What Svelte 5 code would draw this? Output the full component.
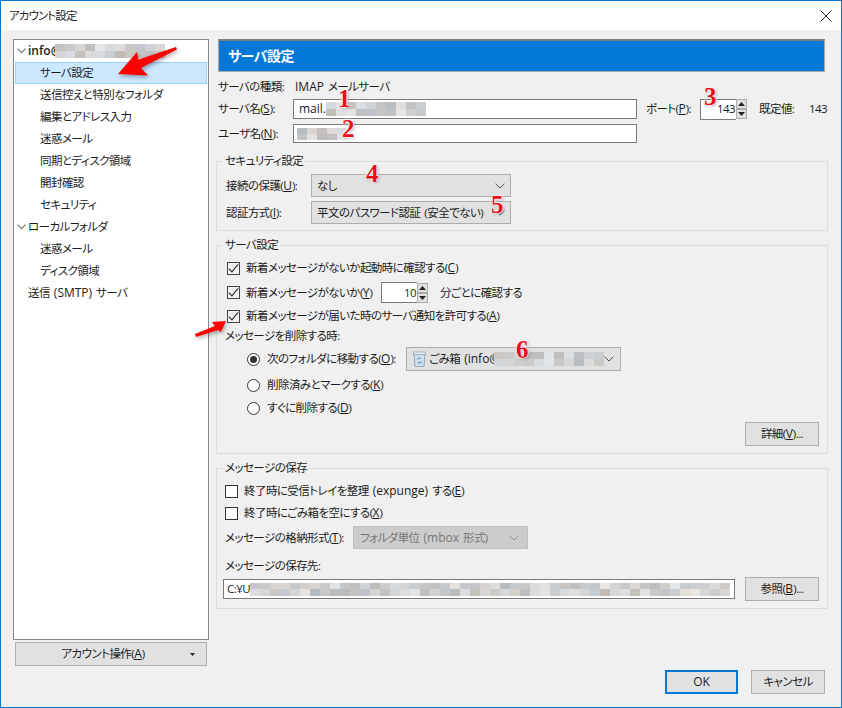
<script>
  const tree = [
    { label: 'サーバ設定', selected: true },
    { label: '送信控えと特別なフォルダ' },
    { label: '編集とアドレス入力' },
    { label: '迷惑メール' },
    { label: '同期とディスク領域' },
    { label: '開封確認' },
    { label: 'セキュリティ' }
  ];
  const local = ['迷惑メール', 'ディスク領域'];
  const numbers = [
    { n: 1, x: 337, y: 85 },
    { n: 2, x: 341, y: 115 },
    { n: 3, x: 703, y: 83 },
    { n: 4, x: 365, y: 160 },
    { n: 5, x: 490, y: 191 },
    { n: 6, x: 515, y: 336 }
  ];
  function shade(i) {
    const h = Math.abs(Math.sin(i * 12.9898 + 4.1) * 43758.5453) % 1;
    const t = Math.abs(Math.sin(i * 78.233 + 1.7) * 24634.6345) % 1;
    const l = Math.round(186 + h * 44);
    const d = Math.round((t - 0.5) * 10);
    return `rgb(${l + d},${l},${l - d})`;
  }
  const cells = (n, seed) => Array.from({ length: n }, (_, i) => shade(seed + i));
</script>

{#snippet blur(cols, rows, seed, cellH)}
  <span class="blur" style="grid-template-columns: repeat({cols}, 10px); grid-auto-rows: {cellH}px">
    {#each cells(cols * rows, seed) as c}<i style="background: {c}"></i>{/each}
  </span>
{/snippet}

{#snippet chevron()}
  <svg class="chev" width="10" height="6" viewBox="0 0 10 6"><path d="M.6.8 5 5 9.4.8" fill="none" stroke="#555" stroke-width="1"/></svg>
{/snippet}

{#snippet treeChevron()}
  <svg class="tchev" width="9" height="6" viewBox="0 0 9 6"><path d="M.5.7 4.5 4.7 8.5.7" fill="none" stroke="#777" stroke-width="1.2"/></svg>
{/snippet}

{#snippet check(on)}
  <span class="check">
    {#if on}<svg width="11" height="11" viewBox="0 0 11 11"><path d="M1 5.6 4 8.8 10 1.4" fill="none" stroke="#333" stroke-width="1.2"/></svg>{/if}
  </span>
{/snippet}

{#snippet radio(on)}
  <span class="radio">{#if on}<span class="dot"></span>{/if}</span>
{/snippet}

{#snippet spin()}
  <span class="spin">
    <span class="sbtn"><svg width="7" height="4" viewBox="0 0 7 4"><path d="M3.5 0 7 4H0z" fill="#222"/></svg></span>
    <span class="sbtn"><svg width="7" height="4" viewBox="0 0 7 4"><path d="M0 0h7L3.500 4z" fill="#222"/></svg></span>
  </span>
{/snippet}

<div class="window">
  <header class="title">
    <span>アカウント設定</span>
    <svg width="12" height="12" viewBox="0 0 12 12"><path d="M.5.500l11 11M11.500.5l-11 11" stroke="#222" stroke-width="1" fill="none"/></svg>
  </header>

  <div class="body">
    <aside class="side">
      <div class="tree">
        <div class="row root">{@render treeChevron()}<b class="en">info@</b><span class="over">{@render blur(11, 2, 3, 7)}</span></div>
        {#each tree as t}
          <div class="row child" class:sel={t.selected}>{t.label}</div>
        {/each}
        <div class="row root">{@render treeChevron()}<span>ローカルフォルダ</span></div>
        {#each local as t}
          <div class="row child">{t}</div>
        {/each}
        <div class="row smtp">送信 <span class="en">(SMTP)</span> サーバ</div>
      </div>
      <div class="btn acct">
        <span>アカウント操作(<u>A</u>)</span>
        <svg width="5" height="3" viewBox="0 0 5 3"><path d="M0 0h5L2.500 3z" fill="#222"/></svg>
      </div>
    </aside>

    <main class="main">
      <h1 class="head">サーバ設定</h1>

      <div class="line type"><span class="lbl0">サーバの種類:</span><span><span class="en">IMAP</span> メールサーバ</span></div>

      <div class="line server">
        <span class="lbl1">サーバ名(<u>S</u>):</span>
        <div class="field grow"><span class="en">mail.</span>{@render blur(10, 2, 40, 7)}</div>
        <span class="port">ポート(<u>P</u>):</span>
        <div class="field portf">143</div>
        {@render spin()}
        <span class="def">既定値:</span>
        <span class="defv">143</span>
      </div>

      <div class="line user">
        <span class="lbl1">ユーザ名(<u>N</u>):</span>
        <div class="field userf">{@render blur(5, 2, 70, 6)}</div>
      </div>

      <section class="group sec">
        <span class="legend">セキュリティ設定</span>
        <div class="line c23">
          <span class="lbl2">接続の保護(<u>U</u>):</span>
          <div class="combo w200"><span>なし</span>{@render chevron()}</div>
        </div>
        <div class="line c23 mt4">
          <span class="lbl2">認証方式(<u>I</u>):</span>
          <div class="combo w200"><span>平文のパスワード認証 (安全でない)</span>{@render chevron()}</div>
        </div>
      </section>

      <section class="group srv">
        <span class="legend">サーバ設定</span>
        <div class="line r20">{@render check(true)}<span>新着メッセージがないか起動時に確認する(<u>C</u>)</span></div>
        <div class="line r21">
          {@render check(true)}<span class="s2">新着メッセージがないか(<u>Y</u>)</span>
          <div class="field minf">10</div>
          {@render spin()}
          <span class="after">分ごとに確認する</span>
        </div>
        <div class="line r20 mt3">{@render check(true)}<span>新着メッセージが届いた時のサーバ通知を許可する(<u>A</u>)</span></div>
        <div class="line plain">メッセージを削除する時:</div>
        <div class="line r24 ind">
          {@render radio(true)}<span class="mv">次のフォルダに移動する(<u>O</u>):</span>
          <div class="combo folder">
            <svg class="trash" width="15" height="16" viewBox="0 0 15 16">
              <path d="M2 3h11l-1 12.500H3z" fill="#cfe0ea" stroke="#8fa5b0" stroke-width=".9"/>
              <path d="M1.500 1h12v2.500h-12z" fill="#e9f1f5" stroke="#8fa5b0" stroke-width=".8"/>
              <path d="M5.500 8.500a2 2 0 0 1 3.500-.8M9.500 10.500a2 2 0 0 1-3.500.6" fill="none" stroke="#4c9fce" stroke-width="1.100"/>
            </svg>
            <span class="ftext">ごみ箱 <span class="en">(info@</span></span><span class="over2">{@render blur(11, 2, 90, 7)}</span>
            {@render chevron()}
          </div>
        </div>
        <div class="line r20 ind mt4">{@render radio(false)}<span class="mv">削除済みとマークする(<u>K</u>)</span></div>
        <div class="line r20 ind mt3">{@render radio(false)}<span class="mv">すぐに削除する(<u>D</u>)</span></div>
        <div class="line end mt4"><div class="btn b74">詳細(<u>V</u>)...</div></div>
      </section>

      <section class="group store">
        <span class="legend">メッセージの保存</span>
        <div class="line r20">{@render check(false)}<span>終了時に受信トレイを整理 <span class="en">(expunge)</span> する(<u>E</u>)</span></div>
        <div class="line r20 mt2">{@render check(false)}<span>終了時にごみ箱を空にする(<u>X</u>)</span></div>
        <div class="line c23 mt3 fmt">
          <span class="lbl3">メッセージの格納形式(<u>T</u>):</span>
          <div class="combo dis"><span>フォルダ単位 <span class="en">(mbox</span> 形式)</span>{@render chevron()}</div>
        </div>
        <div class="line plain dest">メッセージの保存先:</div>
        <div class="line pathrow">
          <div class="field path"><span class="cu">C:¥U</span>{@render blur(48, 2, 130, 6.500)}</div>
          <div class="btn b74">参照(<u>B</u>)...</div>
        </div>
      </section>

      <footer class="foot">
        <div class="btn ok"><span class="en">OK</span></div>
        <div class="btn cancel">キャンセル</div>
      </footer>
    </main>
  </div>

  <!-- screenshot annotations laid over the dialog -->
  <svg class="marks" width="842" height="708" viewBox="0 0 842 708">
    <polygon points="118,74 137,52 138.500,59.500 176,47 177,49.500 141,68 148,75.500" fill="#f00"/>
    <polygon points="226,321 212,322 215,326 195,334 196,337 218,330 221,332" fill="#f00"/>
  </svg>
  {#each numbers as m}
    <span class="num" style="left: {m.x}px; top: {m.y}px">{m.n}</span>
  {/each}
</div>

<style>
  :global(body) { margin: 0; background: #f0f0f0; }
  * { box-sizing: border-box; }
  .window {
    position: relative; width: 842px; height: 708px; overflow: hidden;
    border: 1px solid #0078d7; background: #f0f0f0; color: #1c1c1c;
    font: 11.5px/16px "Open Sans", "Noto Sans CJK JP", sans-serif;
    letter-spacing: -.55px; word-spacing: 1.5px;
    font-feature-settings: "palt"; white-space: nowrap;
  }
  u { text-underline-offset: 1px; font-size: 12px; letter-spacing: 0; }
  .en { font-size: 12px; letter-spacing: 0; }
  .title {
    height: 29px; background: #fff; display: flex; align-items: center;
    justify-content: space-between; padding: 0 9px 0 8px; letter-spacing: -.9px;
  }
  .body { display: flex; gap: 7px; padding: 9px 0 0 12px; }
  .side { width: 196px; }
  .tree { height: 601px; background: #fff; border: 1px solid #828790; padding: 0 1px; }
  .row { height: 22px; display: flex; align-items: center; border: 1px solid transparent; }
  .root { padding-left: 1px; }
  .root b { font-weight: 600; }
  .tchev { margin: 0 2px 0 0; flex: none; }
  .over { display: inline-flex; margin-left: -6px; }
  .over2 { display: inline-flex; margin-left: -6px; }
  .child { padding-left: 24px; }
  .smtp { padding-left: 12px; white-space: pre; }
  .sel { background: #cce8ff; border-color: #99d1ff; }
  .blur { display: inline-grid; flex: none; }
  .blur i { display: block; }
  .btn {
    height: 24px; background: #e1e1e1; border: 1px solid #adadad;
    display: flex; align-items: center; justify-content: center;
  }
  .acct { margin: 2px 2px 0; position: relative; padding-right: 16px; }
  .acct svg { position: absolute; right: 11px; top: 10px; }
  .main { width: 612px; }
  .head {
    margin: 0 3px 0 2px; height: 33px; background: #0078d7; color: #fff;
    border: 1px solid #a9a9a9; border-top: 2px solid #7f7f7f;
    font-size: 14px; font-weight: 700; line-height: 30px; padding-left: 9px;
  }
  .line { display: flex; align-items: center; }
  .type { height: 16px; margin: 7px 0 0 2px; }
  .lbl0 { width: 77px; flex: none; }
  .lbl1 { width: 75px; flex: none; }
  .server { height: 20px; margin: 4px 0 0 2px; }
  .user { height: 19px; margin: 5px 0 0 2px; }
  .field { background: #fff; border: 1px solid #7a7a7a; display: flex; align-items: center; height: 100%; }
  .grow { width: 344px; padding-left: 5px; }
  .port { margin-left: 9px; width: 54px; flex: none; }
  .portf { width: 36px; height: 21px; justify-content: flex-end; border-right: 0; padding-right: 1px; }
  .spin { display: flex; flex-direction: column; width: 11px; height: 20px; flex: none; gap: 0; }
  .sbtn {
    flex: 1; background: #e1e1e1; border: 1px solid #adadad;
    display: flex; align-items: center; justify-content: center;
  }
  .def { margin-left: 12px; width: 50px; flex: none; }
  .userf { width: 344px; padding-left: 3px; }
  .group { position: relative; border: 1px solid #dcdcdc; }
  .legend { position: absolute; left: 6px; top: -9px; padding: 0 2px; background: #f0f0f0; }
  .sec { height: 70px; margin-top: 18px; padding: 12px 0 0 9px; }
  .c23 { height: 23px; }
  .mt2 { margin-top: 2px; }
  .mt3 { margin-top: 3px; }
  .mt4 { margin-top: 4px; }
  .lbl2 { width: 85px; flex: none; }
  .combo {
    height: 100%; background: #e1e1e1; border: 1px solid #adadad;
    display: flex; align-items: center; justify-content: space-between; padding: 0 4px 0 5px;
  }
  .w200 { width: 200px; }
  .chev { flex: none; margin-right: 1px; }
  .srv { height: 209px; margin-top: 14px; padding: 12px 0 0 8px; }
  .store { height: 141px; margin-top: 14px; padding: 12px 0 0 6px; }
  .check {
    width: 13px; height: 13px; flex: none; background: #fff; border: 1px solid #333;
    margin: 0 6px 0 2px; display: flex; align-items: center; justify-content: center;
  }
  .srv .check { background: #f0f0f0; border-color: #444; }
  .r20 { height: 20px; }
  .r21 { height: 21px; margin-top: 4px; }
  .r24 { height: 24px; margin-top: 3px; }
  .s2 { width: 135px; flex: none; }
  .minf { width: 36px; justify-content: flex-end; border-right: 0; padding-right: 1px; }
  .after { margin-left: 12px; }
  .plain { height: 16px; margin-top: 2px; padding-left: 0; }
  .ind { padding-left: 22px; }
  .radio {
    width: 13px; height: 13px; flex: none; border: 1px solid #333; border-radius: 50%; background: #fff;
    display: flex; align-items: center; justify-content: center; margin-right: 7px;
  }
  .dot { width: 7px; height: 7px; border-radius: 50%; background: #333; }
  .mv { width: 139px; flex: none; }
  .folder { width: 215px; padding-left: 5px; justify-content: flex-start; }
  .trash { flex: none; margin-right: 2px; }
  .ftext { flex: none; }
  .folder .chev { margin-left: auto; margin-right: 4px; }
  .end { justify-content: flex-end; padding-right: 8px; }
  .b74 { width: 74px; flex: none; }
  .fmt { margin-left: 2px; }
  .lbl3 { width: 128px; flex: none; }
  .dis { width: 175px; background: #ccc; border-color: #bfbfbf; color: #777; padding-left: 6px; }
  .dis .chev { margin-right: 4px; opacity: .5; }
  .dest { margin: 9px 0 0 2px; }
  .pathrow { height: 24px; margin: 3px 0 0 0; gap: 10px; }
  .path { width: 512px; height: 20px; padding-left: 3px; overflow: hidden; }
  .cu { width: 23px; flex: none; }
  .foot { display: flex; justify-content: flex-end; gap: 13px; margin: 61px 3px 0 0; }
  .ok { width: 73px; border: 2px solid #0078d7; }
  .cancel { width: 74px; }
  .marks { position: absolute; left: -1px; top: -1px; pointer-events: none; filter: drop-shadow(1px 2px 2px rgba(0,0,0,.35)); }
  .num {
    position: absolute; font: 700 25px/26px "Liberation Serif", serif; color: #e8101a; letter-spacing: 0;
    text-shadow: 0 0 2px #fff, 0 0 2px #fff, 0 0 3px #fff, 1px 1px 3px rgba(0,0,0,.45);
  }
</style>
